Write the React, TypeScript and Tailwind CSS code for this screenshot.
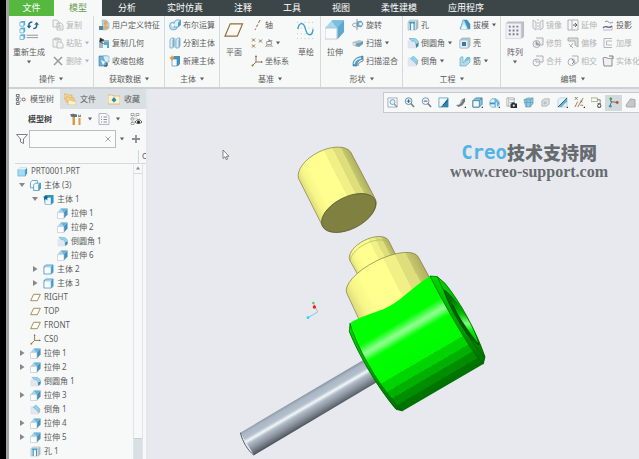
import React, { useState } from 'react';

type IconName = keyof typeof icons;

interface Command {
  icon: IconName;
  label: string;
  menu?: boolean;
  disabled?: boolean;
}

interface TreeItem {
  label: string;
  icon: IconName;
  depth: number;
  arrow?: 'open' | 'closed';
}

// Small icons share a 12 x 12 box
const icons = {
  copy: (
    <g fill="#f4f4f4" stroke="#b5b5b5" strokeWidth=".8">
      <path d="M1 1h4l2 2v5H1zM5 4h4l2 2v5H5z" />
      <path d="M6.500 7h3M6.500 9h3" />
    </g>
  ),
  paste: (
    <g fill="#f4f4f4" stroke="#b5b5b5" strokeWidth=".8">
      <path d="M1 2h8v8H1zM3 1h4v2H3z" />
      <path d="M5 5h4l2 2v4H5z" />
    </g>
  ),
  remove: <path d="M2 2l8 8M10 2l-8 8" stroke="#999" strokeWidth="1.500" />,
  userFeature: (
    <>
      <path d="M4 1h4l3 3v5l-3 2H5z" fill="#b9d6e6" stroke="#7d9db3" strokeWidth=".5" />
      <circle cx="7.500" cy="4" r="2" fill="#d9a866" />
      <path d="M4.500 10c0-5 6-5 6 0z" fill="#e1b06c" />
      <path d="M1 7h4v4H1z" fill="#4e86aa" />
    </>
  ),
  copyGeom: (
    <>
      <path d="M1 3v8h4V5h6V3z" fill="#9bb7c8" />
      <path d="M6 5h5v6H6z" fill="#5aa7cf" />
      <path d="M6 8h3v3H6z" fill="#eef6fa" />
      <path d="M2 1v4l4-2zM2 5l4 2" fill="#333" stroke="#333" strokeWidth=".6" />
    </>
  ),
  shrink: (
    <>
      <path d="M1 1h8v10H1z" fill="#6fb2d8" stroke="#37789f" strokeWidth=".6" />
      <path d="M5 1h6v6H7z" fill="#d8eef8" stroke="#6b9cb8" strokeWidth=".5" />
      <path d="M3 5l4 2-2 3z" fill="#fff" />
      <path d="M9 8v3H6" stroke="#444" fill="none" />
    </>
  ),
  boolean: (
    <>
      <circle cx="4.500" cy="7" r="4" fill="#b9ddf0" stroke="#5a9dc2" strokeWidth=".7" />
      <path d="M5 4l2-3h4.500v5L9 8H5z" fill="#dff1fa" stroke="#4b93bb" strokeWidth=".7" />
      <path d="M9 8l2.500-2V1L9 3.500z" fill="#4b9fca" />
      <circle cx="4" cy="6" r="1.500" fill="#fff" />
    </>
  ),
  split: (
    <>
      <path d="M1 3l1.500-2h2.500v8l-1.500 2H1zM7 3l1.500-2H11v8l-1.500 2H7z" fill="#e2eff6" stroke="#5f9fc2" strokeWidth=".7" />
      <path d="M3.500 3L5 1v8l-1.500 2zM9.500 3L11 1v8l-1.500 2z" fill="#6fb0d0" />
      <path d="M6 1v10" stroke="#7b99aa" strokeWidth=".6" />
    </>
  ),
  newBody: (
    <>
      <path d="M3 3l2-2h6v8l-2 2H3z" fill="#3d94c4" />
      <path d="M3 4h5v7H3z" fill="#f6fbfe" stroke="#3b7ea4" strokeWidth=".6" />
      <path d="M3 0l.9 2L6 3l-2.100 1L3 6l-1-2L0 3l2-1z" fill="#e8972d" />
    </>
  ),
  axis: <path d="M9 1L7.500 4M6.800 5.500L5.500 8M4.800 9.500L4 11" stroke="#8d6f3e" strokeWidth="1" />,
  point: (
    <path
      d="M1 1.500l3 3M4 1.500l-3 3M8 2.500l3 3M11 2.500l-3 3M1 7.500l3 3M4 7.500l-3 3"
      stroke="#957544"
      strokeWidth="1"
    />
  ),
  csys: (
    <>
      <path d="M5 1v6h6M5 7l-4 4" stroke="#94764a" strokeWidth="1" fill="none" />
      <path d="M5 0l1 2H4zM12 7l-2-1v2z" fill="#666" />
      <circle cx="1.500" cy="10.500" r="1" fill="#a36d26" />
    </>
  ),
  revolve: (
    <>
      <path d="M5 3l4-1 2 3-2 3-4-1z" fill="#7cbddf" stroke="#538eae" strokeWidth=".7" />
      <path d="M5 0v12" stroke="#75838b" strokeWidth=".8" strokeDasharray="3 1" />
      <ellipse cx="4" cy="6" rx="3.500" ry="2" fill="none" stroke="#7f98a6" strokeWidth=".8" />
      <circle cx="8.500" cy="5" r="1.300" fill="#fff" />
    </>
  ),
  sweep: (
    <>
      <path d="M1 5l6-2 4 1-4 3-5 1z" fill="#b8c3c9" />
      <path d="M2 7l5-1 4-2v3L7 10 3 9z" fill="#6b9fbc" />
      <path d="M1 5l3 1v3L1 8z" fill="#e7edf0" stroke="#8b979e" strokeWidth=".5" />
    </>
  ),
  blend: (
    <>
      <path d="M1 8c1-4 4-6 10-7v3c-4 1-6 3-6 7H1z" fill="#4d9fc9" stroke="#3b7797" strokeWidth=".6" />
      <path d="M2 9c1-4 3-5 7-6" stroke="#dff2fb" strokeWidth="1.300" fill="none" />
      <path d="M6 11c0-3 2-4 5-5V4" stroke="#586a75" fill="none" strokeWidth=".8" />
    </>
  ),
  hole: (
    <>
      <path d="M1 3l2-2h8v8l-2 2H1z" fill="#d3dce1" stroke="#9aa9b2" strokeWidth=".5" />
      <path d="M9 3l2-2v8l-2 2z" fill="#aebac1" />
      <path d="M2 3.500h6M3.500 3v8M7 3v8" stroke="#3f9dcb" strokeWidth="1.300" />
      <path d="M4.300 5h2v6h-2z" fill="#fff" />
    </>
  ),
  round: (
    <>
      <path d="M1 4h5c2 0 3 2 3 7H1z" fill="#e3e6ee" stroke="#d5d9e0" strokeWidth=".5" />
      <path d="M2 1.500h4c4 0 5.500 2 5.500 5.500L9 9C9 5 8 4 5 4z" fill="#9ad6ef" stroke="#4d99bd" strokeWidth=".5" />
      <path d="M9 7l2.500-1v3L9 11z" fill="#3e86a8" />
    </>
  ),
  chamfer: (
    <>
      <path d="M1 3h4l4 4v4H1z" fill="#e3e6ee" stroke="#d5d9e0" strokeWidth=".5" />
      <path d="M3.500 3.500l3-2.500L11 5.500l-2 3z" fill="#8dd3ef" stroke="#5ba3c4" strokeWidth=".5" />
      <path d="M9 8.500l2-3v3L9 11z" fill="#aab3bb" />
    </>
  ),
  draft: (
    <>
      <path d="M1 10l3-9h4l3 4v5z" fill="#b4dff1" stroke="#518da9" strokeWidth=".6" />
      <path d="M5 1h3l3 4v5H9z" fill="#3e92bd" />
      <path d="M2 10L5 5l3 5z" fill="#eaf6fb" />
    </>
  ),
  shell: (
    <>
      <path d="M1 3l2-2h8v8l-2 2H1z" fill="#b6cbd7" stroke="#8aa2b0" strokeWidth=".6" />
      <path d="M1 3h8v8H1z" fill="#e4eef3" stroke="#9fb4c0" strokeWidth=".6" />
      <path d="M3 5h4v4H3z" fill="#287fac" />
    </>
  ),
  rib: (
    <>
      <path d="M1 3l2-1.500L4 2v6l7-5v4L7 11H1z" fill="#b3dced" stroke="#5e9db8" strokeWidth=".6" />
      <path d="M4 7l4-5h3v2z" fill="#6fbfe0" />
    </>
  ),
  mirror: (
    <g stroke="#a9adb0" strokeWidth=".8" fill="#f2f2f2">
      <path d="M1 1l3 2v8L1 9zM11 1L8 3v8l3-2z" />
      <path d="M6 0v12" strokeDasharray="2 1" />
    </g>
  ),
  trim: (
    <g stroke="#a4a8ab" strokeWidth=".9" fill="#f0f0f0">
      <path d="M4 1h7v7H8" />
      <circle cx="4.500" cy="7" r="3.500" />
      <path d="M4 4v4h4" fill="#999" />
    </g>
  ),
  merge: (
    <g stroke="#a4a8ab" strokeWidth=".9" fill="#f4f4f4">
      <path d="M4 1h7v6H8" />
      <circle cx="4.500" cy="7.500" r="3.500" />
      <path d="M4 4v3h4" />
    </g>
  ),
  extend: (
    <g stroke="#a4a8ab" strokeWidth=".9" fill="none">
      <path d="M1 1h10v10H1zM5 1v10" />
      <path d="M6 6h4M8 4l2 2-2 2" stroke="#555" />
    </g>
  ),
  offset: (
    <g stroke="#a4a8ab" strokeWidth=".9" fill="#dcdcdc">
      <path d="M1 1h10v9L8 8V4H1z" />
      <path d="M2 7l4 4M3 10l3-4" fill="none" />
    </g>
  ),
  intersect: (
    <g stroke="#a4a8ab" strokeWidth=".9" fill="none">
      <path d="M5 1h6v6L8 9" />
      <circle cx="4.500" cy="7" r="3.500" />
      <path d="M5 4l2 3-2 2" stroke="#777" />
    </g>
  ),
  project: (
    <g fill="none" strokeWidth="1">
      <path d="M3 3c3-3 4 3 8 0" stroke="#858b90" />
      <path d="M1 9c3-4 5 2 9-2v4H1" stroke="#b6b9bd" />
      <path d="M1 9c3-4 5 2 9-2" stroke="#7857a8" strokeWidth="1.300" />
    </g>
  ),
  thicken: <path d="M10 1.500H2v9h8M10 4H4.500v4H10" fill="none" stroke="#b4b7b9" strokeWidth="1" />,
  solidify: (
    <>
      <path d="M1 3c3-2 5 2 9 0v8H2z" fill="#f0f0f0" stroke="#8b8f92" strokeWidth="1" />
      <path d="M7 1h4v3" fill="none" stroke="#777" />
    </>
  ),
  modelTree: (
    <g fill="#fff" stroke="#555" strokeWidth=".9">
      <path d="M3 3v6M4 3.500l4 2M4 9l4-2.500" strokeDasharray="1 1" />
      <path d="M1.500 .5h3v2.500h-3zM1.500 4.800h2.500v2.400H1.500zM1.500 9h3v2.500h-3z" />
      <circle cx="9.500" cy="6" r="1.600" />
    </g>
  ),
  folders: (
    <g fill="#f8d58f" stroke="#d0a759" strokeWidth=".6">
      <path d="M0 1h3l1 1h4v4H0z" />
      <path d="M2 4h3l1 1h4v4H2z" />
      <path d="M4 7h3l1 1h4v4H4z" fill="#fff0cb" />
    </g>
  ),
  favorites: (
    <>
      <path d="M0 2h4l1 1h7v8H0z" fill="#fdf2d2" stroke="#d3b26e" strokeWidth=".8" />
      <path d="M6 4l2.500 3L6 9.500 3.500 7z" fill="#2f8aa8" />
    </>
  ),
  hammer: (
    <>
      <path d="M0 1.500c2-1 4-1 7 0V4H1.500z" fill="#687078" />
      <path d="M2.500 4h2.500v8H2.500zM8.500 5h2v7h-2z" fill="#d99a49" />
      <path d="M8 1v3h3V1L10 2.500H9z" fill="#858c92" />
    </>
  ),
  list: (
    <g fill="none" stroke="#a2a5b2" strokeWidth=".8">
      <path d="M1 .5h7l3 2.500v8.500H1z" fill="#f8f8fb" />
      <path d="M3 4h1M3 6.500h1M3 9h1M5.500 4h3.500M5.500 6.500h3.500M5.500 9h3.500" stroke="#6c7180" />
    </g>
  ),
  treeFind: (
    <>
      <path d="M2 2v8M2 3h4M2 9h3M6 3v3h4" stroke="#999" fill="none" strokeWidth=".8" strokeDasharray="1 1" />
      <path d="M1 .5h3v2H1zM6 .5h3v2H6zM1 5h3v2H1zM1 9.500h3v2H1z" fill="#fff" stroke="#888" strokeWidth=".7" />
      <path d="M5 9c2-3 5-3 7 0-2 2-5 2-7 0z" fill="#fff" stroke="#333" strokeWidth=".8" />
      <circle cx="8.500" cy="9" r="1.500" fill="#222" />
    </>
  ),
  filter: <path d="M.5 1.500h11L7.500 6v4.500l-3-1.500V6z" fill="#fafafa" stroke="#7d8286" strokeWidth="1" />,
  part: (
    <>
      <path d="M1 4l2-2h8v6l-2 3H1z" fill="#3796c5" />
      <path d="M1 4h8v7H1z" fill="#a4dbf2" stroke="#4a9ec8" strokeWidth=".5" />
      <path d="M1 4l2-2h8L9 4z" fill="#e3f5fc" />
    </>
  ),
  bodies: (
    <g fill="#f4fafd" stroke="#4a9bc6" strokeWidth=".9">
      <path d="M.5 2.500l2-2H8v6l-2 2H.5z" />
      <path d="M4 5l2-1.500h5.500V9L9.500 11.500H4z" />
      <path d="M9.500 5l2-1.500V9l-2 2.500z" fill="#4aa0cc" />
    </g>
  ),
  activeBody: (
    <>
      <path d="M1 3l2-2h8.500v8l-2 2.500H2z" fill="#3793c2" />
      <path d="M2.500 4h6v7h-6z" fill="#edf8fd" />
      <path d="M3 1l1 2h2L4.500 4.500 5 7 3 5.500 1 7l.5-2.500L0 3h2z" fill="#12668f" />
    </>
  ),
  body: (
    <>
      <path d="M1 3l2-2h8v8l-2 2H1z" fill="#4ca4d0" stroke="#3b8ab3" strokeWidth=".7" />
      <path d="M1.500 3.500h7v7h-7z" fill="#fafdff" />
      <path d="M3 1.500h7L9 3H2z" fill="#c6e7f5" />
    </>
  ),
  extrude: (
    <>
      <path d="M.5 5L4 .5h7.500L7.500 5z" fill="#a5d4ea" />
      <path d="M7.500 5l4-4.500V7l-4 4.500z" fill="#4591ba" />
      <path d="M4 .5L7.500 5l4-4.500z" fill="#6cb2d6" />
      <path d="M.5 5h7v6.500h-7z" fill="#fdfeff" stroke="#bcc1cd" strokeWidth=".7" />
    </>
  ),
  plane: <path d="M4 2.500h7.300L8 9.500H.7z" fill="#fdfdf8" stroke="#a08450" strokeWidth="1" />,
  fit: (
    <g fill="none" stroke="#8d989f" strokeWidth=".8">
      <path d="M1 1h10v10H1z" />
      <circle cx="6" cy="5.500" r="2.700" stroke="#4b8db3" fill="#e2f1f8" />
      <path d="M8 8l3 3" strokeWidth="1.500" />
    </g>
  ),
  zoomIn: (
    <g fill="none" stroke="#5f89a6" strokeWidth="1">
      <circle cx="5" cy="4.500" r="3.700" fill="#e9f5fb" />
      <path d="M3 4.500h4M5 2.500v4" stroke="#1d5f8b" />
      <path d="M7.500 7l3.500 4" stroke="#777" strokeWidth="1.600" />
    </g>
  ),
  zoomOut: (
    <g fill="none" stroke="#7391a5" strokeWidth="1">
      <circle cx="5" cy="4.500" r="3.700" fill="#f1f7fa" />
      <path d="M3 4.500h4" stroke="#1d5f8b" />
      <path d="M7.500 7l3.500 4" stroke="#777" strokeWidth="1.600" />
    </g>
  ),
  repaint: (
    <>
      <path d="M1 1h10v10H1z" fill="#f3fafd" stroke="#6aa9c9" strokeWidth="1" />
      <path d="M11 1v10H1c6-1 6-6 10-10z" fill="#2d83ae" />
      <path d="M5 9l5-5" stroke="#103d59" strokeWidth="1" />
    </>
  ),
  shading: (
    <>
      <path d="M1 9l4-1 2-5 4-2v4L8 9l-4 2z" fill="#70777c" />
      <path d="M2 9l4-2 2-4" stroke="#cdd2d5" fill="none" />
      <path d="M10 12h2v-2z" fill="#333" />
    </>
  ),
  displayStyle: (
    <>
      <path d="M1 4l3-3h7v7l-3 3H1z" fill="#8ac4e1" stroke="#3d7fa6" strokeWidth=".9" />
      <path d="M1 4h7v7H1zM8 4l3-3" fill="#f1f9fc" stroke="#3d7fa6" strokeWidth=".9" />
      <path d="M10 12h2v-2z" fill="#333" />
    </>
  ),
  orientations: (
    <>
      <path d="M1 5l2-3h5l3 3v4l-3 2H3L1 9z" fill="#e7f4fa" stroke="#4c92b7" strokeWidth=".7" />
      <path d="M1 6h10v2H1z" fill="#3c95c6" />
      <path d="M6 1l4 3v7H6z" fill="#67b5dc" />
      <path d="M8 6v5h4" stroke="#fff" fill="none" strokeWidth="1" />
      <path d="M10 12h2v-2z" fill="#333" />
    </>
  ),
  saved: (
    <>
      <path d="M1 1h8v9H1zM3 1v9M4 3h5M4 6h5" fill="#fff" stroke="#9299a0" strokeWidth=".8" />
      <path d="M5 7h1l1-1h2l1 1h2v5H5z" fill="#292e32" />
      <circle cx="8.500" cy="9.300" r="1.200" fill="#eee" />
    </>
  ),
  perspective: (
    <>
      <path d="M1 3l4-2h6v6l-3 4H3z" fill="#91c7e0" stroke="#5792af" strokeWidth=".6" />
      <path d="M1 3h7l3-2M8 3v8M1 6h10M4 3v8" stroke="#5493b4" strokeWidth=".6" fill="none" />
    </>
  ),
  section: (
    <>
      <path d="M2 4l3-2h5v6l-3 2H2z" fill="#dcdedf" stroke="#a9acae" strokeWidth=".8" />
      <path d="M4 5h3v3H4z" fill="#bbbfc1" />
    </>
  ),
  cutPlane: (
    <>
      <path d="M1 3l2-2h8v8l-2 2H1z" fill="#e6f2f8" stroke="#a6c2d1" strokeWidth=".7" />
      <path d="M1 11L11 1v4l-6 6z" fill="#66afd3" />
      <path d="M1 11L11 1" stroke="#245f80" strokeWidth="1" />
      <path d="M10 12h2v-2z" fill="#333" />
    </>
  ),
  datumFilter: (
    <>
      <path
        d="M1 0l3 3M4 0L1 3M10 1L4 11M7 4l2 2M9 4L7 6M1 11l3-6M7 9h3"
        stroke="#8e7346"
        strokeWidth="1"
      />
      <path d="M10 12h2v-2z" fill="#333" />
    </>
  ),
  annotations: (
    <>
      <path d="M0 1h7v4H0z" fill="#fcfae9" stroke="#80866f" strokeWidth=".7" />
      <path d="M7 3h3v3M7 7h4M7 12h4" stroke="#555" fill="none" strokeWidth=".8" />
      <circle cx="9" cy="9.500" r="1.800" fill="#fff" stroke="#333" />
    </>
  ),
  spin: (
    <>
      <path d="M3 1v4l7 1M4 5l-2 5" stroke="#536a72" strokeWidth="1" fill="none" />
      <circle cx="3" cy="2" r="1.500" fill="#3ca34b" />
      <circle cx="10" cy="6" r="1.600" fill="#ca4941" />
      <circle cx="2.500" cy="10" r="1.500" fill="#3d91c2" />
    </>
  ),
  eraser: <path d="M1 9l5-7 5 1v8H2z" fill="#c5c7c9" stroke="#8e9295" strokeWidth=".7" />,
};

const bigIcons = {
  regenerate: (
    <>
      {[1, 8, 15].map((y) => (
        <g key={y}>
          <path d={`M1 ${y + 1}l1.500-1.500h4v4l-1.500 1.500H1z`} fill="#55b0dd" />
          <path d={`M1 ${y + 1}h4v4H1z`} fill="#f4fbfe" stroke="#63a9cb" strokeWidth=".7" />
        </g>
      ))}
      <path d="M8 15.500h12M8 18h12" stroke="#8e969b" strokeWidth="1" />
      <path d="M14 1.500c-3 0-4 2-3.500 4.500M15 8.500c3 0 4-2 3.500-4.500" fill="none" stroke="#17668d" strokeWidth="1.600" />
      <path d="M8 5.500h5l-2.500 3zM16 4.500h5L18.500 1.500z" fill="#17668d" />
    </>
  ),
  plane: <path d="M6.500 3.500h13L14 16.500H1z" fill="#fbfaf4" stroke="#8c7040" strokeWidth="1.200" />,
  sketch: (
    <>
      <path d="M1 2h18M1 8h18M1 14h18M1 19h18" stroke="#b1b9be" strokeWidth=".9" strokeDasharray="1 3" />
      <path d="M2 9c1-7 6-8 8 0s7 8 8 0" stroke="#3c9ed0" strokeWidth="1.400" fill="none" />
    </>
  ),
  extrude: (
    <>
      <path d="M0 8L7 0h13l-7 8z" fill="#a9d7eb" />
      <path d="M7 0h13v12l-7 8V8z" fill="#5aa9d1" />
      <path d="M7 0l6 8 7-8z" fill="#7abfe0" />
      <path d="M0 8h12.500v11.500H0z" fill="#f9fbfc" stroke="#aeb8be" strokeWidth=".7" />
    </>
  ),
  pattern: (
    <>
      <path d="M1 3l2-2h17v16l-2 2z" fill="#b9bdc5" />
      <path d="M1 3h16v16H1z" fill="#f0f1f5" stroke="#c5c8cf" strokeWidth=".6" />
      {[6, 10, 14].map((y) => (
        <path key={y} d={`M4 ${y + 0.5}h2M8 ${y + 0.5}h2M12 ${y + 0.5}h2`} stroke="#7a7f8e" strokeWidth="2" />
      ))}
    </>
  ),
};

const menuTabs = ['分析', '实时仿真', '注释', '工具', '视图', '柔性建模', '应用程序'];

const treeItems: TreeItem[] = [
  { label: 'PRT0001.PRT', icon: 'part', depth: 0 },
  { label: '主体 (3)', icon: 'bodies', depth: 1, arrow: 'open' },
  { label: '主体 1', icon: 'activeBody', depth: 2, arrow: 'open' },
  { label: '拉伸 1', icon: 'extrude', depth: 3 },
  { label: '拉伸 2', icon: 'extrude', depth: 3 },
  { label: '倒圆角 1', icon: 'round', depth: 3 },
  { label: '拉伸 6', icon: 'extrude', depth: 3 },
  { label: '主体 2', icon: 'body', depth: 2, arrow: 'closed' },
  { label: '主体 3', icon: 'body', depth: 2, arrow: 'closed' },
  { label: 'RIGHT', icon: 'plane', depth: 1 },
  { label: 'TOP', icon: 'plane', depth: 1 },
  { label: 'FRONT', icon: 'plane', depth: 1 },
  { label: 'CS0', icon: 'csys', depth: 1 },
  { label: '拉伸 1', icon: 'extrude', depth: 1, arrow: 'closed' },
  { label: '拉伸 2', icon: 'extrude', depth: 1, arrow: 'closed' },
  { label: '倒圆角 1', icon: 'round', depth: 1 },
  { label: '拉伸 3', icon: 'extrude', depth: 1, arrow: 'closed' },
  { label: '倒角 1', icon: 'chamfer', depth: 1 },
  { label: '拉伸 4', icon: 'extrude', depth: 1, arrow: 'closed' },
  { label: '拉伸 5', icon: 'extrude', depth: 1, arrow: 'closed' },
  { label: '孔 1', icon: 'hole', depth: 1 },
];

const viewTools: IconName[] = [
  'fit',
  'zoomIn',
  'zoomOut',
  'repaint',
  'shading',
  'displayStyle',
  'orientations',
  'saved',
  'perspective',
  'section',
  'cutPlane',
  'datumFilter',
  'annotations',
  'spin',
  'eraser',
];

const Icon: React.FC<{ name: IconName; small?: boolean }> = ({ name, small }) => (
  <svg viewBox="0 0 12 12" fill="none" aria-hidden="true" className={small ? 'size-[11px] shrink-0' : 'size-3 shrink-0'}>
    {icons[name]}
  </svg>
);

const Caret = () => (
  <svg viewBox="0 0 4 4" aria-hidden="true" className="size-1 shrink-0">
    <path d="M0 .5h4L2 3.500z" fill="currentColor" />
  </svg>
);

const CommandColumn: React.FC<{ commands: Command[] }> = ({ commands }) => (
  <div className="flex flex-col">
    {commands.map((command) => (
      <button
        key={command.label}
        type="button"
        disabled={command.disabled}
        className="flex h-[18px] items-center gap-0.5 whitespace-nowrap text-[#5c5c5c] disabled:text-[#b4b4b4]"
      >
        <Icon name={command.icon} />
        <span>{command.label}</span>
        {command.menu && (
          <span className="pl-px">
            <Caret />
          </span>
        )}
      </button>
    ))}
  </div>
);

const BigCommand: React.FC<{ icon: keyof typeof bigIcons; label: string; menu?: boolean }> = ({ icon, label, menu }) => (
  <button type="button" className="flex flex-col items-center pt-1 whitespace-nowrap">
    <svg viewBox="0 0 21 20" fill="none" aria-hidden="true" className="size-5">
      {bigIcons[icon]}
    </svg>
    <span className="mt-1.5 leading-3">{label}</span>
    {menu && (
      <span className="flex h-2 items-center">
        <Caret />
      </span>
    )}
  </button>
);

const RibbonGroup: React.FC<{ title: string; children: React.ReactNode }> = ({ title, children }) => (
  <section className="flex shrink-0 flex-col border-r border-[#d5d9db] px-1">
    <div className="flex h-[54px] items-start gap-[7px]">{children}</div>
    <button type="button" className="flex h-[17px] items-center justify-center gap-1">
      <span>{title}</span>
      <Caret />
    </button>
  </section>
);

const Ribbon = () => (
  <div className="flex shrink-0 overflow-hidden border-b-2 border-[#cdd1d4] bg-[#f7f9f9] text-[8px] text-[#5c5c5c]">
    <RibbonGroup title="操作">
      <BigCommand icon="regenerate" label="重新生成" menu />
      <CommandColumn
        commands={[
          { icon: 'copy', label: '复制', disabled: true },
          { icon: 'paste', label: '粘贴', disabled: true, menu: true },
          { icon: 'remove', label: '删除', disabled: true, menu: true },
        ]}
      />
    </RibbonGroup>
    <RibbonGroup title="获取数据">
      <CommandColumn
        commands={[
          { icon: 'userFeature', label: '用户定义特征' },
          { icon: 'copyGeom', label: '复制几何' },
          { icon: 'shrink', label: '收缩包络' },
        ]}
      />
    </RibbonGroup>
    <RibbonGroup title="主体">
      <CommandColumn
        commands={[
          { icon: 'boolean', label: '布尔运算' },
          { icon: 'split', label: '分割主体' },
          { icon: 'newBody', label: '新建主体' },
        ]}
      />
    </RibbonGroup>
    <RibbonGroup title="基准">
      <BigCommand icon="plane" label="平面" />
      <CommandColumn
        commands={[
          { icon: 'axis', label: '轴' },
          { icon: 'point', label: '点', menu: true },
          { icon: 'csys', label: '坐标系' },
        ]}
      />
      <BigCommand icon="sketch" label="草绘" />
    </RibbonGroup>
    <RibbonGroup title="形状">
      <BigCommand icon="extrude" label="拉伸" />
      <CommandColumn
        commands={[
          { icon: 'revolve', label: '旋转' },
          { icon: 'sweep', label: '扫描', menu: true },
          { icon: 'blend', label: '扫描混合' },
        ]}
      />
    </RibbonGroup>
    <RibbonGroup title="工程">
      <CommandColumn
        commands={[
          { icon: 'hole', label: '孔' },
          { icon: 'round', label: '倒圆角', menu: true },
          { icon: 'chamfer', label: '倒角', menu: true },
        ]}
      />
      <CommandColumn
        commands={[
          { icon: 'draft', label: '拔模', menu: true },
          { icon: 'shell', label: '壳' },
          { icon: 'rib', label: '筋', menu: true },
        ]}
      />
    </RibbonGroup>
    <RibbonGroup title="编辑">
      <BigCommand icon="pattern" label="阵列" menu />
      <div className="flex gap-[5px]">
        <CommandColumn
          commands={[
            { icon: 'mirror', label: '镜像', disabled: true },
            { icon: 'trim', label: '修剪', disabled: true },
            { icon: 'merge', label: '合并', disabled: true },
          ]}
        />
        <CommandColumn
          commands={[
            { icon: 'extend', label: '延伸', disabled: true },
            { icon: 'offset', label: '偏移', disabled: true },
            { icon: 'intersect', label: '相交', disabled: true },
          ]}
        />
        <CommandColumn
          commands={[
            { icon: 'project', label: '投影' },
            { icon: 'thicken', label: '加厚', disabled: true },
            { icon: 'solidify', label: '实体化', disabled: true },
          ]}
        />
      </div>
    </RibbonGroup>
  </div>
);

const indents = ['pl-2', 'pl-2.5', 'pl-[23px]', 'pl-[37px]'];

const ModelTree = () => {
  const [query, setQuery] = useState('');
  const visibleItems = query.trim()
    ? treeItems.filter((item) => item.label.toLowerCase().includes(query.toLowerCase()))
    : treeItems;

  return (
    <aside className="flex w-[139px] shrink-0 flex-col border-r-2 border-[#e3e7ec] bg-[#f7f9f9] text-[8px] text-[#5c5c5c]">
      <nav className="flex h-5 shrink-0 bg-[#d9dfe2]">
        <button type="button" className="flex w-[51px] items-center gap-1 bg-[#f7f9f9] pl-1.5 whitespace-nowrap">
          <Icon name="modelTree" small />
          <span>模型树</span>
        </button>
        <button type="button" className="flex w-11 items-center gap-1 pl-1 whitespace-nowrap">
          <Icon name="folders" />
          <span>文件</span>
        </button>
        <button type="button" className="flex flex-1 items-center gap-1 pl-1 whitespace-nowrap">
          <Icon name="favorites" />
          <span>收藏</span>
        </button>
      </nav>

      <div className="flex h-5 shrink-0 items-center pr-1 pl-[19px]">
        <h2 className="flex-1 font-bold text-[#444]">模型树</h2>
        <div className="flex items-center gap-1.5">
          <button type="button" aria-label="设置" className="flex items-center gap-1.5">
            <Icon name="hammer" />
            <Caret />
          </button>
          <button type="button" aria-label="显示" className="flex items-center gap-1.5">
            <Icon name="list" />
            <Caret />
          </button>
          <button type="button" aria-label="搜索树" className="pl-1">
            <Icon name="treeFind" />
          </button>
        </div>
      </div>

      <div className="flex h-[19px] shrink-0 items-center pr-1.5 pl-[7px]">
        <Icon name="filter" />
        <label className="ml-px flex h-[18px] min-w-0 flex-1 items-center border border-[#b9bdc0] bg-[#fafbfb]">
          <input
            aria-label="筛选"
            value={query}
            onChange={(e) => setQuery(e.target.value)}
            className="min-w-0 flex-1 px-1 outline-none"
          />
          <button type="button" aria-label="清除" onClick={() => setQuery('')} className="px-1">
            <svg viewBox="0 0 6 6" className="size-1.5" aria-hidden="true">
              <path d="M.5.5l5 5M5.500.5l-5 5" stroke="#999" strokeWidth=".9" />
            </svg>
          </button>
        </label>
        <button type="button" aria-label="筛选选项" className="px-1">
          <Caret />
        </button>
        <button type="button" aria-label="添加" className="pl-1">
          <svg viewBox="0 0 8 8" className="size-2" aria-hidden="true">
            <path d="M4 0v8M0 4h8" stroke="#8b8f92" strokeWidth="1.800" />
          </svg>
        </button>
      </div>

      <div className="ml-1.5 flex h-4 shrink-0 justify-end overflow-hidden border-b border-[#d5d9dc] pt-0.5">
        <div className="w-2 overflow-hidden border-l border-[#d0d4d7] pl-[3px]">C</div>
      </div>

      <div className="flex min-h-0 flex-1">
        <ul className="min-w-0 flex-1 overflow-hidden font-['Noto_Sans','Noto_Sans_CJK_SC',sans-serif]">
          {visibleItems.map((item, index) => (
            <li key={index} className={indents[item.depth]}>
              <div className="flex h-[14px] items-center whitespace-nowrap">
                {item.depth > 0 && (
                  <span className="flex w-[11px] shrink-0">
                    {item.arrow && (
                      <svg viewBox="0 0 6 6" className="size-1.5" aria-hidden="true">
                        <path d={item.arrow === 'open' ? 'M0 1h6L3 5z' : 'M1 0l4.500 3L1 6z'} fill="#888" />
                      </svg>
                    )}
                  </span>
                )}
                <Icon name={item.icon} small />
                <span className="pl-[3px]">{item.label}</span>
              </div>
            </li>
          ))}
        </ul>
        <div className="mr-[3px] flex w-2.5 shrink-0 flex-col border-x border-[#e0e4e8] bg-[#f7f9f9]">
          <button
            type="button"
            aria-label="向上滚动"
            className="flex h-2.5 rotate-180 items-center justify-center border-t border-[#d5dade] text-[#888]"
          >
            <Caret />
          </button>
          <div className="flex-1" />
          <div className="h-[21px] border-t border-[#c4d2dc] bg-[#d9dfe2]" />
        </div>
      </div>
    </aside>
  );
};

const ModelView = () => (
  <svg
    viewBox="148 89 491 370"
    preserveAspectRatio="xMinYMin meet"
    aria-hidden="true"
    className="absolute inset-0 size-full"
  >
    <defs>
      <linearGradient id="cap" gradientUnits="userSpaceOnUse" x1="206" y1="146" x2="362" y2="66">
        <stop offset="0" stopColor="#dede7c" />
        <stop offset=".1" stopColor="#f4f488" />
        <stop offset=".25" stopColor="#ffff90" />
        <stop offset=".6" stopColor="#ffff90" />
        <stop offset=".6" stopColor="#f0f087" />
        <stop offset=".75" stopColor="#f0f087" />
        <stop offset=".75" stopColor="#dede7c" />
        <stop offset=".88" stopColor="#dede7c" />
        <stop offset=".88" stopColor="#c8c86e" />
        <stop offset="1" stopColor="#b0b060" />
      </linearGradient>
      <linearGradient id="neck" href="#cap" gradientUnits="userSpaceOnUse" x1="360" y1="392" x2="476" y2="332" />
      <linearGradient id="base" href="#cap" gradientUnits="userSpaceOnUse" x1="351" y1="491" x2="565" y2="381" />
      <linearGradient id="housing" gradientUnits="userSpaceOnUse" x1="344" y1="591" x2="498" y2="855">
        <stop offset="0" stopColor="#00ff00" />
        <stop offset=".23" stopColor="#00ff00" />
        <stop offset=".27" stopColor="#3cff3c" />
        <stop offset=".32" stopColor="#90ff90" />
        <stop offset=".35" stopColor="#70ff70" />
        <stop offset=".39" stopColor="#20ff20" />
        <stop offset=".41" stopColor="#00ff00" />
        <stop offset=".66" stopColor="#00fa00" />
        <stop offset=".66" stopColor="#00d400" />
        <stop offset=".76" stopColor="#00d400" />
        <stop offset=".76" stopColor="#00b000" />
        <stop offset=".84" stopColor="#00b000" />
        <stop offset=".84" stopColor="#008e00" />
        <stop offset=".92" stopColor="#008e00" />
        <stop offset=".92" stopColor="#007600" />
        <stop offset="1" stopColor="#007000" />
      </linearGradient>
      <linearGradient id="rim" x1="0" y1="0" x2="0" y2="1">
        <stop offset="0" stopColor="#00d800" />
        <stop offset=".5" stopColor="#00a800" />
        <stop offset="1" stopColor="#006c00" />
      </linearGradient>
      <linearGradient id="bore" x1="0" y1="0" x2="0" y2="1">
        <stop offset="0" stopColor="#006000" />
        <stop offset=".4" stopColor="#00c000" />
        <stop offset=".6" stopColor="#80ff80" />
        <stop offset=".75" stopColor="#00f000" />
        <stop offset="1" stopColor="#00d000" />
      </linearGradient>
      <linearGradient id="rod" gradientUnits="userSpaceOnUse" x1="30" y1="908" x2="69" y2="975">
        <stop offset="0" stopColor="#8f9aa6" />
        <stop offset=".1" stopColor="#a9b6c4" />
        <stop offset=".3" stopColor="#b4c0cc" />
        <stop offset=".42" stopColor="#f2f7fa" />
        <stop offset=".54" stopColor="#b0bbc7" />
        <stop offset=".75" stopColor="#8a949f" />
        <stop offset=".9" stopColor="#6a727b" />
        <stop offset="1" stopColor="#50565d" />
      </linearGradient>
    </defs>

    <g transform="translate(230 130) scale(.33333)" strokeWidth="2" strokeLinejoin="round">
      {/* loose cap */}
      <path d="M206 146A88 48 -27 0 1 362 66L436 207A88 45 -27 0 1 278 289z" fill="url(#cap)" stroke="#77773e" />
      <ellipse cx="356" cy="249" rx="88" ry="48" transform="rotate(-27 356 249)" fill="#808040" stroke="#4f4f28" />

      {/* stepped shaft */}
      <path d="M360 392A65 34 -27 0 1 476 332L500 380L387 440z" fill="url(#neck)" stroke="#77773e" />
      <path d="M361 396A65 33 -27 0 1 475 337" fill="none" stroke="#b0b05c" />
      <path d="M351 491A120 47 -27 0 1 565 381L600 445L470 560L388 570z" fill="url(#base)" stroke="#77773e" />

      {/* rod */}
      <path d="M31 908L400 690L440 757L72 976z" fill="url(#rod)" />
      <path d="M31 908C38 935 52 960 72 976" fill="none" stroke="#555d65" strokeWidth="3" />

      {/* housing */}
      <path
        d="M360 580C385 562 425 551 460 538C510 517 545 472 600 438L622 440L645 460C690 515 735 595 765 680L760 702L518 843L498 838C445 775 388 680 358 605z"
        fill="url(#housing)"
      />
      <path
        d="M360 580L358 605C388 680 445 775 498 838L518 843C460 785 400 690 366 600z"
        fill="url(#rim)"
        stroke="#005a00"
      />
      <path
        d="M600 438L622 440L645 460C690 515 735 595 765 680L760 702C740 690 650 540 600 438z"
        fill="url(#rim)"
        stroke="#005a00"
      />
      <path d="M622 440C665 535 715 630 764 682" fill="none" stroke="#005400" />
      <path d="M642 480C665 490 730 585 747 645C715 630 655 530 642 480z" fill="#006c00" stroke="#003c00" />
      <path d="M654 492C682 510 732 590 745 640C718 606 674 545 654 492z" fill="url(#bore)" />
      <path d="M668 525C685 565 710 605 735 632" fill="none" stroke="#004d00" strokeWidth="4" />

      {/* spin centre */}
      <path d="M263 546L250 519" stroke="#c99a54" />
      <path d="M263 546L234 563" stroke="#62d4f0" strokeWidth="3" />
      <circle cx="250" cy="519" r="4" fill="#5bd05b" />
      <circle cx="253" cy="531" r="5" fill="#e3261e" />
      <circle cx="234" cy="563" r="4" fill="#33cdf2" />
    </g>

    <path d="M223 150v8.500l2-1.800 1.300 3 1.300-.6-1.300-2.800h2.700z" fill="#fff" stroke="#555" strokeWidth=".7" />
  </svg>
);

const App = () => {
  return (
    <div className="flex h-screen overflow-hidden bg-black pl-1.5 font-['Noto_Sans_CJK_SC','Noto_Sans',sans-serif]">
      <div className="flex min-w-0 flex-1 flex-col border-l-[3px] border-[#a3a3a3]">
        <header className="flex h-4 shrink-0 gap-px overflow-hidden bg-[#3c4648] text-[9px] leading-3 text-white">
          <button type="button" className="w-[45px] shrink-0 bg-[#56b83f]">
            文件
          </button>
          <button type="button" className="-ml-px shrink-0 bg-[#f7f9f9] px-[15px] text-[#6b9a50]">
            模型
          </button>
          {menuTabs.map((tab) => (
            <button key={tab} type="button" className="shrink-0 px-[15px] whitespace-nowrap">
              {tab}
            </button>
          ))}
        </header>

        <Ribbon />

        <div className="flex min-h-0 flex-1">
          <ModelTree />
          <main className="relative flex min-w-0 flex-1 flex-col overflow-hidden bg-[#e8e9ee]">
            <ModelView />
            <div
              role="toolbar"
              className="relative mt-[3px] flex h-[21px] items-center self-end border border-r-0 border-[#c6cacc] bg-[#f7f9f9]"
            >
              {viewTools.map((tool) => (
                <button
                  key={tool}
                  type="button"
                  aria-label={tool}
                  aria-pressed={tool === 'spin'}
                  className="flex h-4 w-[17px] items-center justify-center aria-pressed:bg-[#d3dadc]"
                >
                  <Icon name={tool} small />
                </button>
              ))}
            </div>
            <div className="relative mt-[27px] mr-[31px] flex flex-col items-center self-end whitespace-nowrap">
              <div className="flex items-center text-[18px] leading-6 font-black text-[#666b70]">
                <span className="font-['DejaVu_Sans_Mono',monospace] text-[19px] font-bold text-[#52b4e4]">Creo</span>
                <span>技术支持网</span>
              </div>
              <a
                href="#support"
                className="font-['Liberation_Serif',serif] text-[16px] leading-4 font-bold text-[#666b70]"
              >
                www.creo-support.com
              </a>
            </div>
          </main>
        </div>
      </div>
    </div>
  );
};

export default App;
